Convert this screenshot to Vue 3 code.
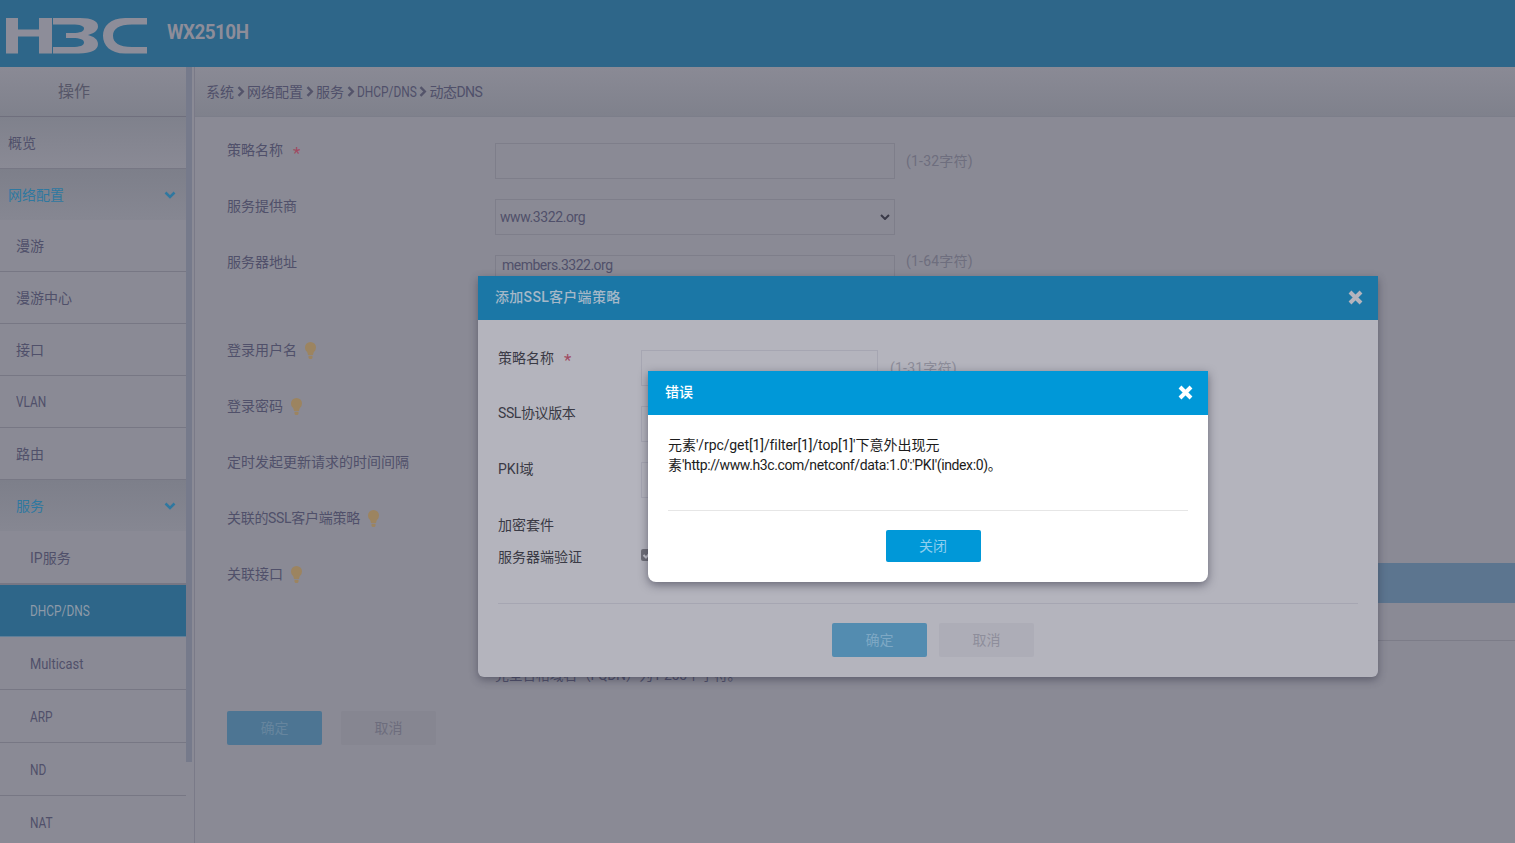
<script setup>
const navItems = [
  { label: '概览', cls: 'top' },
  { label: '网络配置', cls: 'group', chevron: true },
  { label: '漫游', cls: 'sub' },
  { label: '漫游中心', cls: 'sub' },
  { label: '接口', cls: 'sub' },
  { label: 'VLAN', cls: 'sub', text: 'cond' },
  { label: '路由', cls: 'sub' },
  { label: '服务', cls: 'group sub', chevron: true },
  { label: 'IP服务', cls: 'leaf first' },
  { label: 'DHCP/DNS', cls: 'leaf active', text: 'cond' },
  { label: 'Multicast', cls: 'leaf', text: 'cond-soft' },
  { label: 'ARP', cls: 'leaf', text: 'cond' },
  { label: 'ND', cls: 'leaf', text: 'cond' },
  { label: 'NAT', cls: 'leaf', text: 'cond' }
]
const crumbs = ['系统', '网络配置', '服务', 'DHCP/DNS', '动态DNS']
const formRows = [
  { label: '策略名称', star: true, kind: 'input', hint: '(1-32字符)' },
  { label: '服务提供商', kind: 'select', value: 'www.3322.org' },
  { label: '服务器地址', kind: 'input', value: 'members.3322.org', hint: '(1-64字符)', top: true },
  { label: '' },
  { label: '登录用户名', bulb: true },
  { label: '登录密码', bulb: true },
  { label: '定时发起更新请求的时间间隔' },
  { label: '关联的SSL客户端策略', bulb: true, tight: true },
  { label: '关联接口', bulb: true }
]
</script>

<template>
  <div class="page">
    <header class="topbar">
      <svg class="logo" width="142" height="36" viewBox="0 0 142 36" aria-label="H3C">
        <path fill="#8d8d99" d="M0 0h12v11.500h21V0h13v35.500H33V18.500H12v17H0z"/>
        <path fill="#8d8d99" d="M47 0H74C86 0 92 3 92 8.500C92 12.500 88 15.500 82 17C88 18.500 92 21.500 92 26C92 32 85 35.500 73 35.500H47V29H66C74 29 78 27.500 78 24.500C78 21.500 74 20 67 20H60V15H67C74 15 78 13.500 78 10.500C78 8 74 6.500 66 6.500H47z"/>
        <path fill="#8d8d99" d="M141 0V6.500H126C113 6.500 107 11 107 17.700C107 24.500 113 29 126 29H141V35.500H119C104 35.500 97 27 97 17.700C97 8.500 104 0 119 0z"/>
      </svg>
      <span class="model">WX2510H</span>
    </header>

    <div class="shell">
      <aside class="sidebar">
        <div class="nav">
          <div class="nav-head">操作</div>
          <div v-for="item in navItems" :key="item.label" class="nav-item" :class="item.cls">
            <span :class="item.text">{{ item.label }}</span>
            <svg v-if="item.chevron" class="chev" width="12" height="8" viewBox="0 0 12 8">
              <path d="M1.500 1.500 6 6l4.500-4.500" fill="none" stroke="#2f78a0" stroke-width="2.500"/>
            </svg>
          </div>
        </div>
        <div class="scroll"><div class="thumb"></div></div>
      </aside>

      <main class="main">
        <div class="crumbs">
          <template v-for="(c, i) in crumbs" :key="c">
            <svg v-if="i" class="sep" width="8" height="11" viewBox="0 0 8 11"><path d="M1.500 1.200 5.800 5.500 1.500 9.800" fill="none" stroke="#54546a" stroke-width="2.400"/></svg>
            <span :class="{ 'cond crumb-cond': c === 'DHCP/DNS', 'crumb-last': c === '动态DNS' }">{{ c }}</span>
          </template>
        </div>

        <div class="form">
          <div v-for="(r, i) in formRows" :key="i" class="row">
            <div class="label" :class="{ tight: r.tight }">
              <span>{{ r.label }}</span>
              <span v-if="r.star" class="star">*</span>
              <svg v-if="r.bulb" class="bulb" width="11" height="17" viewBox="0 0 11 17"><circle cx="5.500" cy="5.500" r="5.500" fill="#9c8460"/><path fill="#9c8460" d="M2 9h7L8 13H3zM3.500 13.800h4V16l-1 1h-2l-1-1z"/></svg>
            </div>
            <div v-if="r.kind === 'input'" class="field" :class="{ 'field-top': r.top }"><span class="latin">{{ r.value }}</span></div>
            <div v-if="r.kind === 'select'" class="field select">
              <span class="latin">{{ r.value }}</span>
              <svg width="10" height="6" viewBox="0 0 10 6"><path d="M1 1l4 4 4-4" fill="none" stroke="#3a3a48" stroke-width="2"/></svg>
            </div>
            <span v-if="r.hint" class="hint" :class="{ 'hint-top': r.top }">{{ r.hint }}</span>
          </div>
          <div class="actions">
            <button class="btn primary-dim">确定</button>
            <button class="btn ghost-dim">取消</button>
          </div>
        </div>

        <div class="under-bar"></div>
        <div class="under-line"></div>
        <div class="under-text">完全合格域名（FQDN）为1-255个字符。</div>
      </main>
    </div>

    <section class="dlg dlg-ssl">
      <div class="dlg-head">
        <span class="ssl-title">添加SSL客户端策略</span>
        <svg class="x" width="15" height="15" viewBox="0 0 15 15"><path d="M2 2l11 11M13 2L2 13" stroke="#b4b4bd" stroke-width="4"/></svg>
      </div>
      <div class="ssl-body">
        <div class="ssl-row"><span class="ssl-label">策略名称<i class="star">*</i></span><div class="ssl-field"></div><span class="ssl-hint">(1-31字符)</span></div>
        <div class="ssl-row"><span class="ssl-label tight-ssl">SSL协议版本</span><div class="ssl-field"></div></div>
        <div class="ssl-row"><span class="ssl-label">PKI域</span><div class="ssl-field"></div></div>
        <div class="ssl-row short"><span class="ssl-label">加密套件</span></div>
        <div class="ssl-row check">
          <span class="ssl-label">服务器端验证</span>
          <svg class="checkbox" width="12" height="12" viewBox="0 0 12 12"><rect width="12" height="12" rx="2" fill="#6f6f78"/><path d="M2.500 6 5 8.500 9.500 3.500" fill="none" stroke="#c4c4cc" stroke-width="2"/></svg>
        </div>
        <div class="ssl-foot">
          <button class="btn ssl-ok">确定</button>
          <button class="btn ssl-cancel">取消</button>
        </div>
      </div>
    </section>

    <section class="dlg dlg-err">
      <div class="dlg-head err-head">
        <span>错误</span>
        <svg class="x" width="15" height="15" viewBox="0 0 15 15"><path d="M2 2l11 11M13 2L2 13" stroke="#fff" stroke-width="4"/></svg>
      </div>
      <div class="err-body">
        <p>元素<span class="l1">'/rpc/get[1]/filter[1]/top[1]'</span>下意外出现元<br>素<span class="l2">'http://www.h3c.com/netconf/data:1.0':'PKI'(index:0)</span>。</p>
        <div class="err-foot"><button class="btn err-close">关闭</button></div>
      </div>
    </section>
  </div>
</template>

<style>
html, body { margin: 0; height: 100%; overflow: hidden; }
</style>

<style scoped>
.page {
  position: relative;
  width: 1515px;
  height: 843px;
  overflow: hidden;
  background: #8a8a95;
  color: #50506a;
  font: 14px/20px Roboto, "Noto Sans CJK SC", sans-serif;
}
.topbar {
  height: 67px;
  background: #2e6689;
  display: flex;
  align-items: center;
  padding-left: 6px;
  box-sizing: border-box;
}
.logo { margin-top: 4px; }
.model {
  display: inline-block;
  margin: -4px 0 0 19px;
  font: 700 21px/24px Roboto, sans-serif;
  letter-spacing: -0.6px;
  color: #8d8d99;
  transform: scaleX(.9);
  transform-origin: left center;
}
.cond { display: inline-block; transform: scaleX(.85); transform-origin: left center; }
.cond-soft { display: inline-block; transform: scaleX(.92); transform-origin: left center; }
.crumb-cond { margin-right: -11px; }
.crumb-last { letter-spacing: -0.5px; }
.shell { display: flex; height: 776px; }
.sidebar { width: 195px; flex: none; display: flex; box-sizing: border-box; border-right: 1px solid #7a7a88; }
.nav { width: 186px; flex: none; }
.scroll { width: 8px; background: #8a8a95; }
.thumb { width: 6px; height: 695px; background: #767a8b; }
.nav-head {
  height: 50px;
  line-height: 49px;
  text-align: center;
  font-size: 16px;
  color: #565668;
  box-sizing: border-box;
  background: linear-gradient(#8a8a95, #7f818c);
  border-bottom: 1px solid #6f6f7d;
  padding-right: 38px;
}
.nav-item {
  height: 52px;
  box-sizing: border-box;
  display: flex;
  align-items: center;
  justify-content: space-between;
  padding: 0 10px 0 16px;
  border-bottom: 1px solid #777784;
}
.nav-item.top { padding-left: 8px; background: linear-gradient(#7f818c, #8a8a95); }
.nav-item.group { background: linear-gradient(#7d7f8a, #868792); color: #2f78a0; padding-left: 8px; border-bottom: 0; height: 51px; }
.nav-item.group.sub { padding-left: 16px; }
.nav-item.leaf { padding: 1px 10px 0 30px; height: 53px; }
.nav-item.first { border-bottom: 2px solid #777784; height: 54px; }
.nav-item.active { background: #2e6689; color: #8d9aa8; height: 52px; padding-top: 0; border-bottom: 1px solid #5f7f99; }
.main { position: relative; flex: 1; min-width: 0; }
.crumbs {
  height: 50px;
  box-sizing: border-box;
  border-bottom: 1px solid #7c7e8a;
  background: linear-gradient(#8a8a95, #7f818c);
  display: flex;
  align-items: center;
  gap: 1.500px;
  padding-left: 11px;
}
.sep { margin: 0 1px; }
.form { padding: 5px 0 0 32px; }
.row { display: flex; height: 56px; align-items: flex-start; position: relative; }
.label { width: 268px; flex: none; padding-top: 18px; display: flex; align-items: center; white-space: nowrap; }
.row:nth-child(n+5) .label { padding-top: 0; margin-top: -6px; height: 20px; }
.label.tight { letter-spacing: -0.3px; }
.star { color: #a04a62; font-style: normal; font-size: 17px; margin-left: 10px; position: relative; top: 3px; }
.bulb { margin-left: 8px; flex: none; }
.field {
  width: 400px;
  height: 36px;
  margin-top: 21px;
  box-sizing: border-box;
  border: 1px solid #7e7e8a;
  padding: 0 6px;
  line-height: 34px;
}
.field-top { line-height: 19px; }
.latin { letter-spacing: -0.5px; }
.select { display: flex; align-items: center; justify-content: space-between; padding: 0 4px; }
.select .latin { letter-spacing: -0.4px; }
.hint { margin: 29px 0 0 11px; color: #6e6e7e; letter-spacing: .2px; }
.hint-top { margin-top: 17px; }
.actions { display: flex; gap: 19px; margin-top: 85px; }
.btn {
  width: 95px;
  height: 34px;
  padding: 0;
  border: 0;
  border-radius: 2px;
  font: inherit;
}
.primary-dim { background: #4d7593; color: #66859e; }
.ghost-dim { background: #868691; color: #6d6d7d; }
.under-bar { position: absolute; left: 1183px; right: 0; top: 496px; height: 40px; background: #5c758f; }
.under-line { position: absolute; left: 1183px; right: 0; top: 573px; height: 1px; background: #7c7c88; }
.under-text { position: absolute; left: 300px; top: 598px; letter-spacing: -0.35px; }

.dlg { position: absolute; box-sizing: border-box; }
.dlg-head {
  height: 44px;
  box-sizing: border-box;
  display: flex;
  align-items: center;
  justify-content: space-between;
  padding: 0 15px 2px 17px;
  font-weight: 500;
}
.ssl-title { letter-spacing: .3px; }
.dlg-ssl {
  left: 478px;
  top: 276px;
  width: 900px;
  height: 401px;
  background: #b4b4bd;
  border-radius: 0 0 6px 6px;
  box-shadow: 0 3px 8px rgba(40, 40, 60, .45);
  color: #3a3a45;
}
.dlg-ssl .dlg-head { background: #1b77a6; color: #a5b8c8; }
.ssl-body { padding: 12px 20px 0; height: 357px; box-sizing: border-box; }
.ssl-row { height: 56px; display: flex; align-items: flex-start; position: relative; }
.ssl-row.short { height: 32px; }
.ssl-row.check { height: 71px; }
.ssl-label { width: 143px; flex: none; padding-top: 15px; }
.tight-ssl { letter-spacing: -0.4px; }
.ssl-label .star { margin-left: 10px; }
.ssl-field { width: 237px; height: 36px; margin-top: 18px; box-sizing: border-box; border: 1px solid #a6a6b2; }
.ssl-hint { margin: 26px 0 0 12px; color: #8d8d9a; letter-spacing: .2px; }
.checkbox { margin-top: 17px; }
.ssl-foot {
  border-top: 1px solid #a6a6b2;
  padding: 19px 0 0 10px;
  display: flex;
  justify-content: center;
  gap: 12px;
}
.ssl-ok { background: #538cb0; color: #7ea8c4; }
.ssl-cancel { background: #adadb7; color: #8e8e9b; }

.dlg-err {
  left: 648px;
  top: 371px;
  width: 560px;
  height: 211px;
  background: #fff;
  border-radius: 0 0 8px 8px;
  box-shadow: 0 3px 10px rgba(30, 30, 50, .5);
  color: #1c1c1c;
}
.err-head { background: #0098d8; color: #fff; }
.err-body { padding: 20px 20px 0; }
.err-body p { margin: 0; height: 75px; }
.l1 { letter-spacing: -0.1px; }
.l2 { letter-spacing: -0.38px; }
.err-foot { border-top: 1px solid #e6e6e6; padding: 19px 0 0 10px; display: flex; justify-content: center; }
.err-close { width: 95px; height: 32px; background: #0098d8; color: #8fcfee; }
</style>
